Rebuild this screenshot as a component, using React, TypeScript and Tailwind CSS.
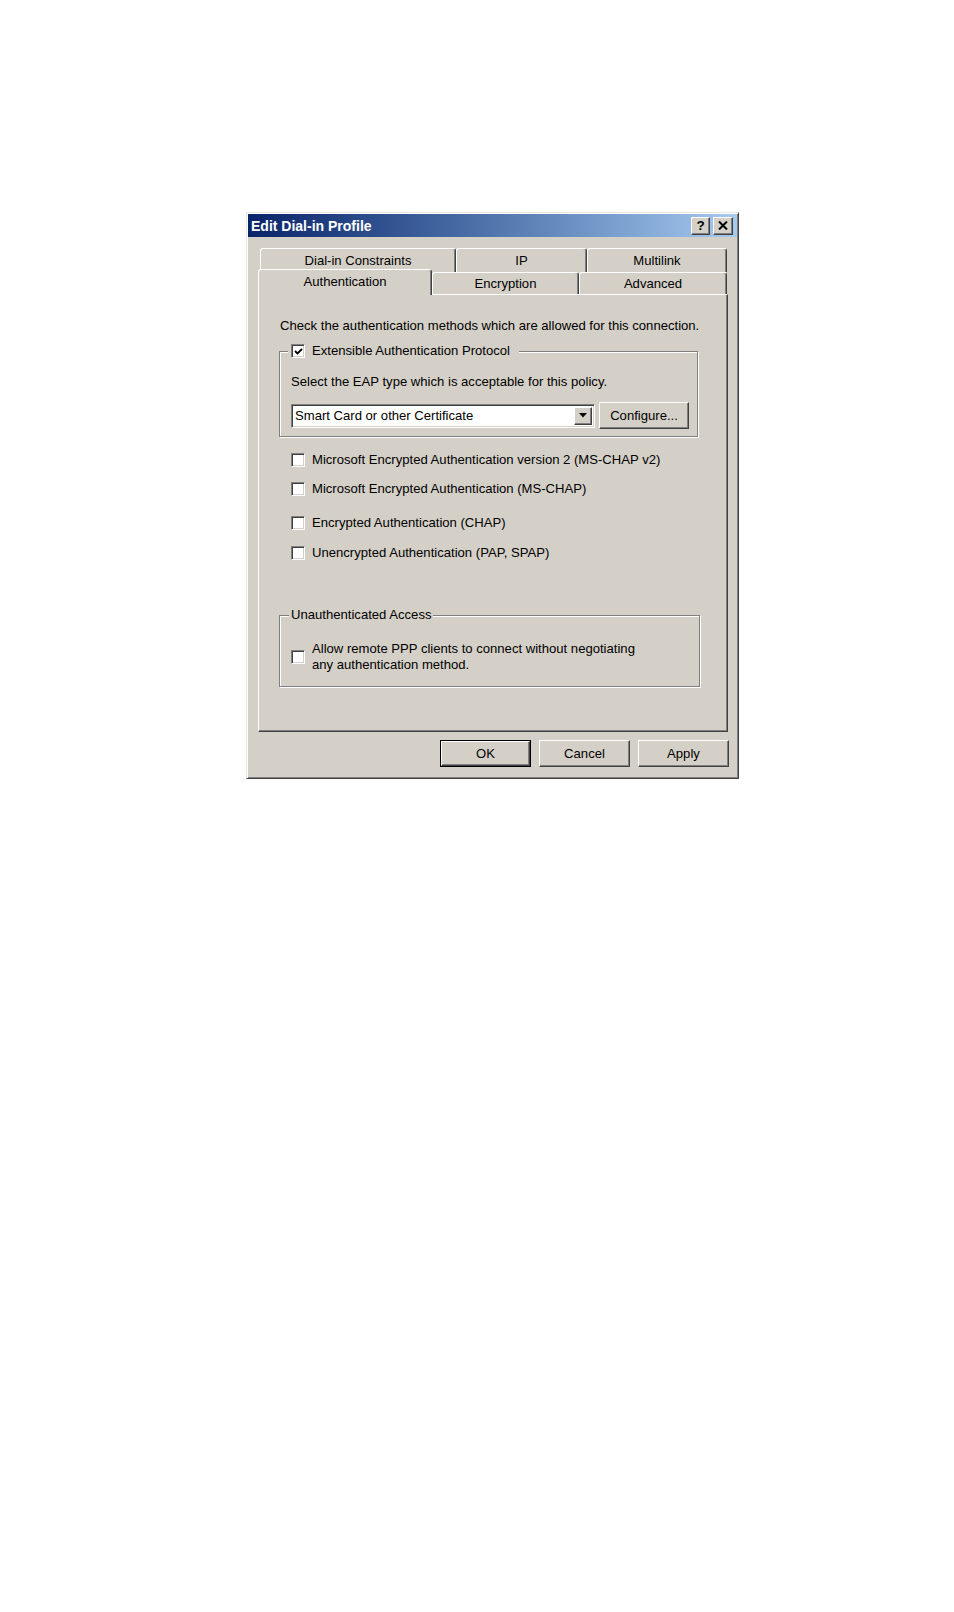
import React from "react";

const raised =
  "border border-t-white border-l-white border-r-[#404040] border-b-[#404040] shadow-[inset_-1px_-1px_0_#808080,inset_1px_1px_0_#d4d0c8]";

const sunken =
  "border border-t-[#808080] border-l-[#808080] border-r-white border-b-white shadow-[inset_1px_1px_0_#404040,inset_-1px_-1px_0_#d4d0c8]";

const etched = "border border-[#808080] shadow-[inset_1px_1px_0_#fff,1px_1px_0_#fff]";

const CheckBox = ({ checked }: { checked?: boolean }) => (
  <span
    className={`flex w-[14px] h-[14px] shrink-0 items-center justify-center bg-white ${sunken}`}
  >
    {checked && (
      <svg width="9" height="9" viewBox="0 0 9 9">
        <path d="M1 4 L3.5 6.5 L8 2" fill="none" stroke="#000" strokeWidth="1.8" />
      </svg>
    )}
  </span>
);

const CheckRow = ({ label, mt }: { label: string; mt: string }) => (
  <div className={`flex items-center h-[16px] gap-[7px] ml-[12px] ${mt}`}>
    <CheckBox />
    <span>{label}</span>
  </div>
);

const Tab = ({
  label,
  width,
  selected,
}: {
  label: string;
  width: string;
  selected?: boolean;
}) => (
  <div
    className={`flex items-center justify-center bg-[#d4d0c8] rounded-t-[3px] border-t border-l border-r border-t-white border-l-white border-r-[#404040] shadow-[inset_-1px_0_0_#808080] ${width} ${
      selected ? "relative z-10 h-[26px] -mb-px pb-[2px]" : "h-full"
    }`}
  >
    {label}
  </div>
);

const Button = ({ label, isDefault }: { label: string; isDefault?: boolean }) => (
  <div className={`w-[91px] h-[27px] ${isDefault ? "border border-black" : ""}`}>
    <div className={`flex h-full w-full items-center justify-center ${raised}`}>
      {label}
    </div>
  </div>
);

export default function App() {
  return (
    <div
      className="w-[954px] h-[1612px] bg-white pt-[212px] pl-[246px] text-black text-[13.1px] leading-[16px]"
      style={{ fontFamily: '"Liberation Sans", Arial, sans-serif' }}
    >
      <div className="flex flex-col w-[493px] h-[567px] bg-[#d4d0c8] border border-t-[#e8e6e1] border-l-[#e8e6e1] border-r-[#404040] border-b-[#404040] shadow-[inset_1px_1px_0_#fff,inset_-1px_-1px_0_#808080]">
        {/* Title bar */}
        <div className="mx-[1px] mt-[1px] h-[23px] flex items-center justify-between bg-gradient-to-r from-[#0a246a] to-[#a6caf0] pl-[3px] pr-[4px]">
          <span className="text-white font-bold text-[14px]">Edit Dial-in Profile</span>
          <div className="flex gap-[3px]">
            <div
              className={`flex w-[19px] h-[18px] items-center justify-center bg-[#d4d0c8] font-bold text-[13.5px] ${raised}`}
            >
              ?
            </div>
            <div
              className={`flex w-[20px] h-[18px] items-center justify-center bg-[#d4d0c8] ${raised}`}
            >
              <svg width="10" height="9" viewBox="0 0 10 9">
                <path d="M1 0.5 L9 8.5 M9 0.5 L1 8.5" stroke="#000" strokeWidth="2" />
              </svg>
            </div>
          </div>
        </div>

        {/* Tabs */}
        <div className="flex h-[24px] mt-[11px] ml-[13px]">
          <Tab label="Dial-in Constraints" width="w-[196px]" />
          <Tab label="IP" width="w-[131px]" />
          <Tab label="Multilink" width="w-[140px]" />
        </div>
        <div className="flex items-end h-[22px] ml-[11px]">
          <Tab label="Authentication" width="w-[174px]" selected />
          <Tab label="Encryption" width="w-[147px]" />
          <Tab label="Advanced" width="w-[148px]" />
        </div>

        {/* Panel */}
        <div className={`ml-[11px] w-[470px] h-[438px] flex flex-col pl-[20px] ${raised}`}>
          <div className="mt-[23px] ml-[1px]">
            Check the authentication methods which are allowed for this connection.
          </div>

          <div className={`relative mt-[17px] w-[419px] h-[86px] ${etched}`}>
            <div className="absolute left-[8px] top-[-9px] flex items-center gap-[7px] bg-[#d4d0c8] pl-[3px] pr-[9px] h-[16px]">
              <CheckBox checked />
              <span>Extensible Authentication Protocol</span>
            </div>
            <div className="flex flex-col pt-[22px] pl-[11px]">
              <div>Select the EAP type which is acceptable for this policy.</div>
              <div className="flex items-center gap-[4px] mt-[12px]">
                <div
                  className={`flex items-center justify-between w-[304px] h-[24px] bg-white pl-[3px] pr-[2px] ${sunken}`}
                >
                  <span>Smart Card or other Certificate</span>
                  <div
                    className={`flex items-center justify-center w-[18px] h-[18px] bg-[#d4d0c8] ${raised}`}
                  >
                    <svg width="8" height="5" viewBox="0 0 8 5">
                      <path d="M0 0 H8 L4 4.5 Z" fill="#000" />
                    </svg>
                  </div>
                </div>
                <div className={`flex items-center justify-center w-[90px] h-[27px] ${raised}`}>
                  Configure...
                </div>
              </div>
            </div>
          </div>

          <CheckRow
            label="Microsoft Encrypted Authentication version 2 (MS-CHAP v2)"
            mt="mt-[15px]"
          />
          <CheckRow label="Microsoft Encrypted Authentication (MS-CHAP)" mt="mt-[13px]" />
          <CheckRow label="Encrypted Authentication (CHAP)" mt="mt-[18px]" />
          <CheckRow label="Unencrypted Authentication (PAP, SPAP)" mt="mt-[14px]" />

          <div className={`relative mt-[54px] w-[421px] h-[72px] ${etched}`}>
            <div className="absolute left-[9px] top-[-9px] bg-[#d4d0c8] px-[2px] h-[16px]">
              Unauthenticated Access
            </div>
            <div className="flex items-center gap-[7px] pt-[25px] pl-[11px]">
              <CheckBox />
              <div className="leading-[15.5px]">
                Allow remote PPP clients to connect without negotiating
                <br />
                any authentication method.
              </div>
            </div>
          </div>
        </div>

        {/* Buttons */}
        <div className="flex justify-end gap-[8px] mt-[8px] pr-[9px]">
          <Button label="OK" isDefault />
          <Button label="Cancel" />
          <Button label="Apply" />
        </div>
      </div>
    </div>
  );
}
